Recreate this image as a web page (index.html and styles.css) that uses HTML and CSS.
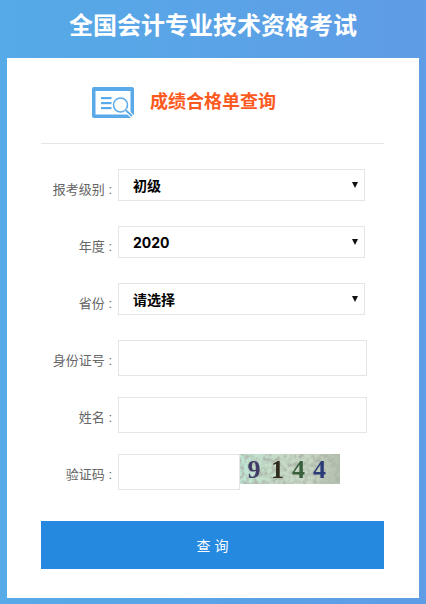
FILE: index.html
```html
<!DOCTYPE html>
<html lang="zh-CN">
<head>
    <meta charset="UTF-8">
    <meta name="viewport" content="width=device-width, initial-scale=1.0">
    <title>全国会计专业技术资格考试</title>
    <link rel="stylesheet" href="styles.css">
</head>
<body>
    <h1 class="page-title">全国会计专业技术资格考试</h1>

    <div class="card">
        <div class="card-head">
            <svg class="head-icon" width="42" height="31" viewBox="0 0 42 31">
                <rect x="0" y="0" width="42" height="31" rx="2" fill="#5aa9e8"/>
                <rect x="3.5" y="4" width="35" height="23.5" fill="#fff"/>
                <rect x="9" y="10" width="10.5" height="2.2" fill="#5aa9e8"/>
                <rect x="9" y="15" width="10.5" height="2.2" fill="#5aa9e8"/>
                <rect x="9" y="20" width="10.5" height="2.2" fill="#5aa9e8"/>
                <circle cx="28.5" cy="18" r="7" fill="#fff" stroke="#5aa9e8" stroke-width="1.5"/>
                <path d="M33.5 23 L42 31" stroke="#fff" stroke-width="4"/>
                <path d="M33.5 23 L40 29" stroke="#5aa9e8" stroke-width="1.8"/>
            </svg>
            <span class="head-text">成绩合格单查询</span>
        </div>

        <form class="query-form" onsubmit="return false">
            <div class="row row-select">
                <label class="label">报考级别 :</label>
                <div class="select-wrap">
                    <select>
                        <option>初级</option>
                        <option>中级</option>
                    </select>
                </div>
            </div>
            <div class="row row-select">
                <label class="label">年度 :</label>
                <div class="select-wrap">
                    <select>
                        <option>2020</option>
                        <option>2019</option>
                    </select>
                </div>
            </div>
            <div class="row row-select">
                <label class="label">省份 :</label>
                <div class="select-wrap">
                    <select>
                        <option>请选择</option>
                    </select>
                </div>
            </div>
            <div class="row">
                <label class="label">身份证号 :</label>
                <input class="field" type="text">
            </div>
            <div class="row">
                <label class="label">姓名 :</label>
                <input class="field" type="text">
            </div>
            <div class="row row-code">
                <label class="label">验证码 :</label>
                <input class="field field-code" type="text">
                <svg class="captcha" width="100" height="30" viewBox="0 0 100 30">
                    <defs>
                        <linearGradient id="captchaBg" x1="0" y1="0" x2="1" y2="0">
                            <stop offset="0" stop-color="#bfe6d6"/>
                            <stop offset="0.35" stop-color="#c6dcc8"/>
                            <stop offset="0.7" stop-color="#c8d6c4"/>
                            <stop offset="1" stop-color="#b4bfae"/>
                        </linearGradient>
                        <filter id="captchaNoise" x="0" y="0" width="100%" height="100%">
                            <feTurbulence type="fractalNoise" baseFrequency="0.22" numOctaves="3" seed="7"/>
                            <feColorMatrix values="0 0 0 0 0.42  0 0 0 0 0.47  0 0 0 0 0.4  0 0 0 2.6 -1"/>
                        </filter>
                        <filter id="captchaBlur">
                            <feGaussianBlur stdDeviation="0.5"/>
                        </filter>
                    </defs>
                    <rect width="100" height="30" fill="url(#captchaBg)"/>
                    <rect width="100" height="30" filter="url(#captchaNoise)"/>
                    <g filter="url(#captchaBlur)">
                        <text class="captcha-num" x="7.5" y="24" fill="#3f3a66">9</text>
                        <text class="captcha-num" x="31" y="24" fill="#2e2a1c">1</text>
                        <text class="captcha-num" x="52" y="24" fill="#37603a">4</text>
                        <text class="captcha-num" x="73" y="24" fill="#2a3a78">4</text>
                    </g>
                </svg>
            </div>
            <button class="submit-btn" type="submit">查 询</button>
        </form>
    </div>
</body>
</html>
```

FILE: styles.css
```css
* {
    box-sizing: border-box;
}

html, body {
    height: 100%;
}

body {
    margin: 0;
    padding: 0 7px 6px;
    overflow: hidden;
    background: linear-gradient(90deg, #55aae7 0%, #5f9ce6 100%);
    font-family: "Liberation Sans", "Noto Sans CJK SC", sans-serif;
}

.page-title {
    margin: 0;
    height: 58px;
    padding-top: 8px;
    text-align: center;
    color: #fff;
    font-size: 24px;
    line-height: 36px;
    font-weight: bold;
}

.card {
    height: 540px;
    padding: 0 35px 0 34px;
    background: #fff;
}

.card-head {
    display: flex;
    align-items: center;
    height: 86px;
    padding: 3px 0 0 51px;
    border-bottom: 1px solid #e5e5e5;
}

.head-icon {
    flex: none;
}

.head-text {
    margin: 0 0 5px 16px;
    color: #fc5a1e;
    font-size: 18px;
    font-weight: bold;
}

.query-form {
    padding-top: 25px;
}

.row {
    display: flex;
    height: 36px;
    margin-bottom: 21px;
}

.row-select {
    height: 32px;
    margin-bottom: 25px;
}

.label {
    flex: none;
    width: 77px;
    margin-top: 6px;
    padding-right: 6px;
    text-align: right;
    white-space: nowrap;
    color: #666;
    font-size: 13px;
    line-height: 30px;
}

.select-wrap {
    position: relative;
    width: 247px;
    height: 32px;
}

.select-wrap::after {
    content: "";
    position: absolute;
    top: 13px;
    right: 7px;
    border-left: 3px solid transparent;
    border-right: 3px solid transparent;
    border-top: 6px solid #111;
}

select {
    display: block;
    width: 100%;
    height: 100%;
    padding: 0 0 0 14px;
    border: 1px solid #e5e5e5;
    border-radius: 0;
    background: #fff;
    appearance: none;
    color: #000;
    font-family: Inter, "Noto Sans CJK SC", sans-serif;
    font-size: 14px;
    font-weight: bold;
}

.field {
    width: 249px;
    height: 36px;
    border: 1px solid #e5e5e5;
    background: #fff;
    outline: none;
}

.field-code {
    width: 122px;
}

.captcha {
    flex: none;
    display: block;
    overflow: visible;
}

.captcha-num {
    font-family: "Liberation Serif", serif;
    font-size: 26px;
    font-weight: bold;
}

.submit-btn {
    display: block;
    width: 343px;
    height: 48px;
    margin-top: 31px;
    border: none;
    background: #2589e0;
    color: #fff;
    font-family: inherit;
    font-size: 14px;
}
```
